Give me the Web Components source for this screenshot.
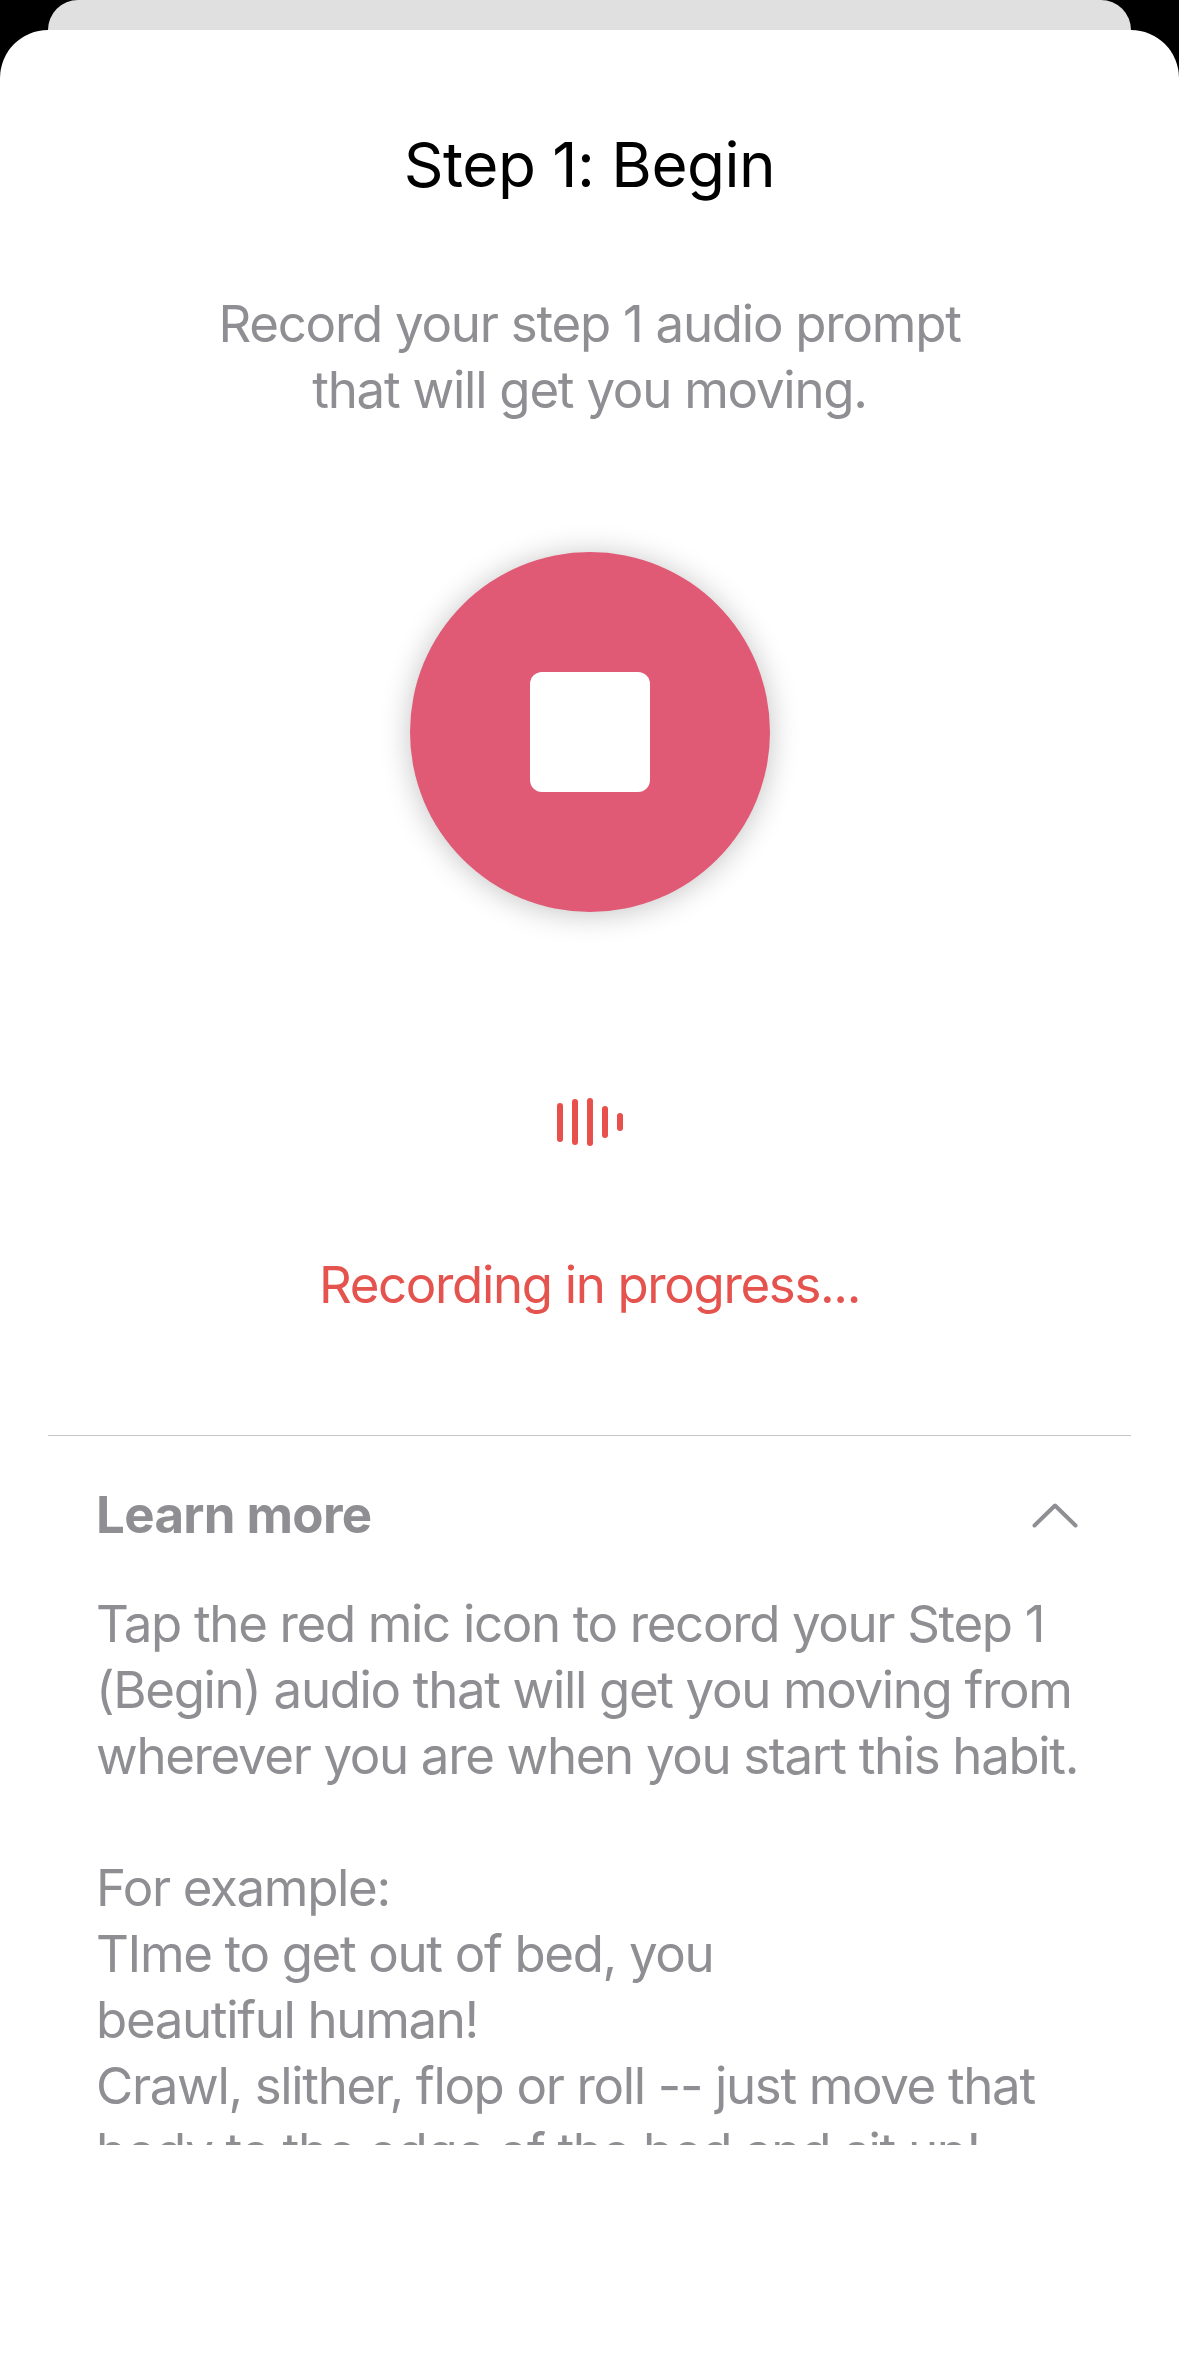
<!DOCTYPE html>
<html lang="en">
<head>
<meta charset="UTF-8">
<title>Step 1: Begin</title>
<style>
html, body { margin: 0; background: #000; }
body { font-family: Inter, "Liberation Sans", sans-serif; }
</style>
</head>
<body>
<prompt-sheet heading="Step 1: Begin">
    <span slot="intro">Record your step 1 audio prompt<br>that will get you moving.</span>
    <record-button slot="record"></record-button>
    <wave-bars slot="wave"></wave-bars>
    <span slot="status">Recording in progress...</span>
    <learn-more slot="more" title-text="Learn more">Tap the red mic icon to record your Step 1<br>(Begin) audio that will get you moving from<br>wherever you are when you start this habit.<br><br>For example:<br>TIme to get out of bed, you<br>beautiful human!<br>Crawl, slither, flop or roll -- just move that<br>body to the edge of the bed and sit up!</learn-more>
</prompt-sheet>

<script>
class PromptSheet extends HTMLElement {
    constructor() {
        super();
        this.attachShadow({ mode: 'open' }).innerHTML = `
        <style>
        :host { display: flex; flex-direction: column; height: 2379px; overflow: hidden; }
        .behind { flex: none; height: 30px; margin: 0 48px; background: #e0e0e0; border-radius: 32px 32px 0 0; }
        .sheet { flex: 1; background: #fff; border-radius: 48px 48px 0 0; display: flex; flex-direction: column; }
        h1 { margin: 99px 0 0; font-size: 62px; line-height: 72px; font-weight: 400; color: #000; letter-spacing: -0.5px; text-align: center; }
        .intro { margin-top: 90px; font-size: 51px; line-height: 66px; color: #8e8e93; text-align: center; letter-spacing: -1.25px; }
        .record { margin-top: 129px; display: flex; justify-content: center; }
        .wave { margin-top: 186px; }
        .status { margin-top: 106px; font-size: 51px; line-height: 66px; color: #e5534f; letter-spacing: -1.35px; text-align: center; }
        .more { margin-top: 117px; }
        </style>
        <div class="behind"></div>
        <section class="sheet">
            <h1></h1>
            <div class="intro"><slot name="intro"></slot></div>
            <div class="record"><slot name="record"></slot></div>
            <div class="wave"><slot name="wave"></slot></div>
            <div class="status"><slot name="status"></slot></div>
            <div class="more"><slot name="more"></slot></div>
        </section>`;
        this.shadowRoot.querySelector('h1').textContent = this.getAttribute('heading');
    }
}

class RecordButton extends HTMLElement {
    constructor() {
        super();
        this.attachShadow({ mode: 'open' }).innerHTML = `
        <style>
        :host { display: flex; width: 360px; height: 360px; border-radius: 50%; background: #e05a75;
                box-shadow: 0 2px 30px rgba(0,0,0,.24); align-items: center; justify-content: center; }
        div { width: 120px; height: 120px; border-radius: 12px; background: #fff; }
        </style>
        <div></div>`;
    }
}

class WaveBars extends HTMLElement {
    constructor() {
        super();
        this.attachShadow({ mode: 'open' }).innerHTML = `
        <style>
        :host { display: flex; justify-content: center; align-items: center; gap: 9px; height: 48px; }
        i { display: block; width: 6px; border-radius: 3px; background: #e8504c; }
        </style>
        <i style="height:39px"></i><i style="height:46px"></i><i style="height:48px"></i><i style="height:32px"></i><i style="height:18px"></i>`;
    }
}

class LearnMore extends HTMLElement {
    constructor() {
        super();
        this.attachShadow({ mode: 'open' }).innerHTML = `
        <style>
        :host { display: block; margin: 0 48px; border-top: 1.5px solid #c6c6c8; }
        header { display: flex; justify-content: space-between; align-items: center; margin: 46px 49px 0 48px;
                 font-size: 51px; line-height: 66px; font-weight: 700; color: #8e8e93; letter-spacing: -0.65px; }
        svg { width: 48px; height: 26px; margin-right: 3.5px; display: block; }
        .body { margin: 43px 49px 0 48px; height: 554px; overflow: hidden; font-size: 51px; line-height: 66px;
                color: #8e8e93; letter-spacing: -1.35px; white-space: nowrap; }
        </style>
        <header>
            <span class="title"></span>
            <svg viewBox="0 0 48 26" fill="none" stroke="#8e8e93" stroke-width="4" stroke-linecap="round" stroke-linejoin="round"><path d="M3.5 23.5 24 3.5 44.5 23.5"/></svg>
        </header>
        <div class="body"><slot></slot></div>`;
        this.shadowRoot.querySelector('.title').textContent = this.getAttribute('title-text');
    }
}

customElements.define('prompt-sheet', PromptSheet);
customElements.define('record-button', RecordButton);
customElements.define('wave-bars', WaveBars);
customElements.define('learn-more', LearnMore);
</script>
</body>
</html>
